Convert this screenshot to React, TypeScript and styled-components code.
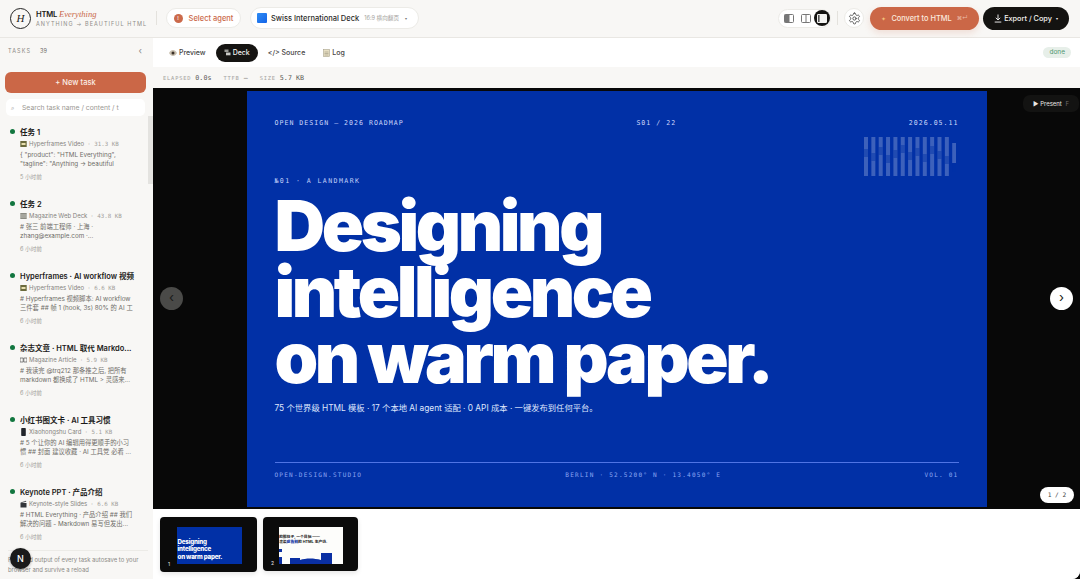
import styled, { createGlobalStyle } from 'styled-components';

const SANS = '"Inter", "Noto Sans CJK SC", sans-serif';
const MONO = '"DejaVu Sans Mono", "Liberation Mono", "Noto Sans CJK SC", monospace';

const tasks = [
	{ title: '任务 1', icon: 'film', type: 'Hyperframes Video', size: '31.3 KB', lines: ['{ "product": "HTML Everything",', '"tagline": "Anything → beautiful'], time: '5 小时前' },
	{ title: '任务 2', icon: 'grid', type: 'Magazine Web Deck', size: '43.8 KB', lines: ['# 张三 前端工程师 · 上海 ·', 'zhang@example.com ·...'], time: '6 小时前' },
	{ title: 'Hyperframes · AI workflow 视频', icon: 'film', type: 'Hyperframes Video', size: '6.6 KB', lines: ['# Hyperframes 视频脚本: AI workflow', '三件套 ## 帧 1 (hook, 3s) 80% 的 AI 工'], time: '6 小时前' },
	{ title: '杂志文章 · HTML 取代 Markdo...', icon: 'book', type: 'Magazine Article', size: '5.9 KB', lines: ['# 我读完 @trq212 那条推之后, 把所有', 'markdown 都换成了 HTML > 灵感来...'], time: '6 小时前' },
	{ title: '小红书图文卡 · AI 工具习惯', icon: 'phone', type: 'Xiaohongshu Card', size: '5.1 KB', lines: ['# 5 个让你的 AI 编辑用得更顺手的小习', '惯 ## 封面 建议收藏 · AI 工具党 必看 ...'], time: '6 小时前' },
	{ title: 'Keynote PPT · 产品介绍', icon: 'clapper', type: 'Keynote-style Slides', size: '6.6 KB', lines: ['# HTML Everything · 产品介绍 ## 我们', '解决的问题 - Markdown 易写但发出...'], time: '6 小时前' },
];

// 슬라이드 우측 상단 바코드 장식: [y, height, 어두운 구간 시작]
const barcode = [
	[0, 39, 12], [0, 39, 20], [0, 39, 8], [0, 39, 24], [0, 39, 14], [0, 39, 4], [0, 39, 18],
	[0, 39, 10], [0, 39, 22], [0, 39, 6], [0, 39, 16], [0, 39, 26], [6, 20, 30],
];

function TaskIcon({ kind }: { kind: string }) {
	if (kind === 'phone') {
		return (
			<svg width="7" height="8" viewBox="0 0 7 8">
				<rect x="1.2" y="0" width="4.6" height="8" rx="0.8" fill="#22252a" />
			</svg>
		);
	}
	if (kind === 'book') {
		return (
			<svg width="7" height="8" viewBox="0 0 7 8">
				<path d="M0 2h3.2v4H0zM3.8 2H7v4H3.8z" fill="none" stroke="#666" strokeWidth="0.8" />
			</svg>
		);
	}
	if (kind === 'clapper') {
		return (
			<svg width="7" height="8" viewBox="0 0 7 8">
				<rect x="0.5" y="3" width="6" height="4.5" fill="#33363a" />
				<path d="M0.5 2.4 6 .8l.3 1L1 3.3z" fill="#55585c" />
			</svg>
		);
	}
	if (kind === 'grid') {
		return (
			<svg width="7" height="8" viewBox="0 0 7 8">
				<rect x="0.3" y="1" width="6.4" height="6" fill="#8b8b82" />
				<path d="M0.3 3h6.4M0.3 5h6.4" stroke="#e5e5dd" strokeWidth="0.6" />
			</svg>
		);
	}
	return (
		<svg width="7" height="8" viewBox="0 0 7 8">
			<rect x="0.3" y="1" width="6.4" height="6" fill="#6b6a3c" />
			<rect x="1.5" y="3" width="4" height="2" fill="#e8dfae" />
		</svg>
	);
}

function PanelIcon({ variant }: { variant: 'left' | 'split' | 'active' }) {
	if (variant === 'active') {
		return (
			<svg width="10" height="9" viewBox="0 0 10 9">
				<rect x="0" y="0" width="10" height="9" rx="1.2" fill="#f4f4f2" />
				<rect x="1" y="1" width="1.6" height="7" fill="#555" />
			</svg>
		);
	}
	return (
		<svg width="10" height="9" viewBox="0 0 10 9" fill="none">
			<rect x="0.5" y="0.5" width="9" height="8" rx="1" stroke="#777" />
			{variant === 'left' ? <rect x="0.5" y="0.5" width="5" height="8" fill="#777" /> : <path d="M5 0.5v8" stroke="#777" />}
		</svg>
	);
}

export default function App() {
	return (
		<>
			<GlobalStyle />
			<Page>
				<TopBar>
					<Brand>
						<BrandMark>H</BrandMark>
						<BrandText>
							<BrandName>
								HTML <em>Everything</em>
							</BrandName>
							<BrandTag>ANYTHING → BEAUTIFUL HTML</BrandTag>
						</BrandText>
					</Brand>
					<TopDivider />
					<AgentPill>
						<AgentDot>!</AgentDot>
						Select agent
					</AgentPill>
					<DeckPill>
						<DeckSwatch />
						<DeckName>Swiss International Deck</DeckName>
						<DeckMeta>16:9 横向翻页</DeckMeta>
						<Caret>▾</Caret>
					</DeckPill>
					<TopRight>
						<LayoutGroup>
							<LayoutButton>
								<PanelIcon variant="left" />
							</LayoutButton>
							<LayoutButton>
								<PanelIcon variant="split" />
							</LayoutButton>
							<LayoutButton $active>
								<PanelIcon variant="active" />
							</LayoutButton>
						</LayoutGroup>
						<TopDivider />
						<GearButton>
							<svg width="13" height="13" viewBox="0 0 24 24" fill="none" stroke="#555" strokeWidth="1.8" strokeLinecap="round" strokeLinejoin="round">
								<path d="M12.22 2h-.44a2 2 0 0 0-2 2v.18a2 2 0 0 1-1 1.73l-.43.25a2 2 0 0 1-2 0l-.15-.08a2 2 0 0 0-2.73.73l-.22.38a2 2 0 0 0 .73 2.73l.15.1a2 2 0 0 1 1 1.72v.51a2 2 0 0 1-1 1.74l-.15.09a2 2 0 0 0-.73 2.73l.22.38a2 2 0 0 0 2.73.73l.15-.08a2 2 0 0 1 2 0l.43.25a2 2 0 0 1 1 1.73V20a2 2 0 0 0 2 2h.44a2 2 0 0 0 2-2v-.18a2 2 0 0 1 1-1.73l.43-.25a2 2 0 0 1 2 0l.15.08a2 2 0 0 0 2.73-.73l.22-.39a2 2 0 0 0-.73-2.73l-.15-.08a2 2 0 0 1-1-1.74v-.5a2 2 0 0 1 1-1.74l.15-.09a2 2 0 0 0 .73-2.73l-.22-.38a2 2 0 0 0-2.73-.73l-.15.08a2 2 0 0 1-2 0l-.43-.25a2 2 0 0 1-1-1.73V4a2 2 0 0 0-2-2z" />
								<circle cx="12" cy="12" r="3" />
							</svg>
						</GearButton>
						<ConvertButton>
							<Spark>✦</Spark> Convert to HTML <Shortcut>⌘↵</Shortcut>
						</ConvertButton>
						<ExportButton>
							<svg width="8" height="9" viewBox="0 0 9 10" fill="none" stroke="#fff" strokeWidth="1">
								<path d="M4.5 0.5v6M2 4.2l2.5 2.5L7 4.2M0.8 9h7.4" />
							</svg>
							Export / Copy <SmallCaret>▾</SmallCaret>
						</ExportButton>
					</TopRight>
				</TopBar>
				<Body>
					<Sidebar>
						<SideHeader>
							<SideLabel>TASKS</SideLabel>
							<SideCount>39</SideCount>
							<Collapse>‹</Collapse>
						</SideHeader>
						<NewTask>+ New task</NewTask>
						<SearchBox>
							<SearchGlyph>⌕</SearchGlyph>
							<SearchText>Search task name / content / t</SearchText>
						</SearchBox>
						<TaskList>
							<ScrollThumb />
							{tasks.map((task) => (
								<TaskItem key={task.title}>
									<TaskDot />
									<TaskBody>
										<TaskTitle>{task.title}</TaskTitle>
										<TaskType>
											<TaskIcon kind={task.icon} />
											<span>{task.type}</span>
											<TaskSize>· {task.size}</TaskSize>
										</TaskType>
										<TaskPreview>
											{task.lines.map((line) => (
												<div key={line}>{line}</div>
											))}
										</TaskPreview>
										<TaskTime>{task.time}</TaskTime>
									</TaskBody>
								</TaskItem>
							))}
						</TaskList>
						<SideFooter>Files and output of every task autosave to your browser and survive a reload</SideFooter>
						<NextBadge>N</NextBadge>
					</Sidebar>
					<Main>
						<TabRow>
							<Tab>
								<svg width="8" height="6" viewBox="0 0 8 6">
									<path d="M0 3c2-4 6-4 8 0-2 4-6 4-8 0z" fill="#c9bfae" />
									<circle cx="4" cy="3" r="1.5" fill="#3a3028" />
								</svg>
								Preview
							</Tab>
							<Tab $active>
								<svg width="7" height="7" viewBox="0 0 7 7">
									<rect x="0.5" y="0.5" width="4" height="2.5" fill="#9a9a96" />
									<rect x="2" y="3.5" width="4.5" height="2.8" fill="#c9c9c5" />
								</svg>
								Deck
							</Tab>
							<Tab>&lt;/&gt; Source</Tab>
							<Tab>
								<svg width="7" height="8" viewBox="0 0 7 8">
									<rect x="0.5" y="0.5" width="6" height="7" fill="#e8e0c4" stroke="#aaa38c" strokeWidth="0.6" />
									<path d="M1.5 3h4M1.5 4.5h4M1.5 6h4" stroke="#8d8672" strokeWidth="0.5" />
								</svg>
								Log
							</Tab>
							<DoneBadge>done</DoneBadge>
						</TabRow>
						<StatsRow>
							<StatLabel>ELAPSED</StatLabel>
							<StatValue>0.0s</StatValue>
							<StatLabel>TTFB</StatLabel>
							<StatValue>—</StatValue>
							<StatLabel>SIZE</StatLabel>
							<StatValue>5.7 KB</StatValue>
						</StatsRow>
						<Stage>
							<Slide>
								<SlideMeta>
									<span>OPEN DESIGN — 2026 ROADMAP</span>
									<span>S01 / 22</span>
									<span>2026.05.11</span>
								</SlideMeta>
								<Barcode>
									<svg width="92" height="40" viewBox="0 0 92 40">
										{barcode.map(([y, h, gap], i) => (
											<g key={i}>
												<rect x={i * 7.35} y={y} width="4" height={h} fill="#fff" opacity={0.24} />
												<rect x={i * 7.35} y={y + gap / 2 + 6} width="4" height="8" fill="#0130a6" opacity={0.45} />
											</g>
										))}
									</svg>
								</Barcode>
								<Kicker>№01 · A LANDMARK</Kicker>
								<Headline>
									Designing
									<br />
									intelligence
									<br />
									on warm paper.
								</Headline>
								<Subline>75 个世界级 HTML 模板 · 17 个本地 AI agent 适配 · 0 API 成本 · 一键发布到任何平台。</Subline>
								<SlideFoot>
									<span>OPEN-DESIGN.STUDIO</span>
									<span>BERLIN · 52.5200° N · 13.4050° E</span>
									<span>VOL. 01</span>
								</SlideFoot>
							</Slide>
							<PresentButton>
								▶ Present <PresentKey>F</PresentKey>
							</PresentButton>
							<NavButton $side="left">‹</NavButton>
							<NavButton $side="right">›</NavButton>
							<PageCount>1 / 2</PageCount>
						</Stage>
						<FilmStrip>
							<Thumb>
								<ThumbSlideBlue>
									<div>Designing</div>
									<div>intelligence</div>
									<div>on warm paper.</div>
								</ThumbSlideBlue>
								<ThumbNumber>1</ThumbNumber>
							</Thumb>
							<Thumb>
								<ThumbSlideLight>
									<ThumbHeading>
										<div>的那柱子, 一个目标 ——</div>
										<div>
											渲染<b>成告别</b>的 HTML 生产线.
										</div>
									</ThumbHeading>
									<ThumbBars>
										<svg width="65" height="37" viewBox="0 0 65 37">
											<path d="M0 22h3v3H0zM0 30h3v7H0zM11 31h10v6H11zM21 33c6-2 14-2 21 0v4H21zM42 26h11v11H42z" fill="#0a2fa3" />
										</svg>
									</ThumbBars>
								</ThumbSlideLight>
								<ThumbNumber>2</ThumbNumber>
							</Thumb>
						</FilmStrip>
					</Main>
				</Body>
			</Page>
		</>
	);
}

const GlobalStyle = createGlobalStyle`
	html, body {
		margin: 0;
		padding: 0;
		background: #0b0b0b;
	}
	* {
		box-sizing: border-box;
	}
`;

const Page = styled.div`
	width: 1080px;
	height: 579px;
	overflow: hidden;
	display: flex;
	flex-direction: column;
	background: #ffffff;
	border-bottom-right-radius: 8px;
	font-family: ${SANS};
	color: #1b1a18;
`;

const TopBar = styled.header`
	height: 38px;
	flex: none;
	display: flex;
	align-items: center;
	padding: 0 11px 1px 10px;
	background: #f8f7f5;
	border-bottom: 1px solid #e9e7e3;
`;

const Brand = styled.div`
	width: 146px;
	display: flex;
	align-items: center;
	gap: 5px;
`;

const BrandMark = styled.div`
	width: 21px;
	height: 21px;
	border-radius: 50%;
	border: 1px solid #222;
	display: flex;
	align-items: center;
	justify-content: center;
	font-family: 'Liberation Serif', serif;
	font-style: italic;
	font-size: 11px;
`;

const BrandText = styled.div`
	display: flex;
	flex-direction: column;
	gap: 1px;
`;

const BrandName = styled.div`
	font-size: 7.6px;
	line-height: 10px;
	font-weight: 600;
	letter-spacing: -0.2px;

	em {
		font-family: 'Liberation Serif', serif;
		font-size: 8.6px;
		font-weight: 400;
		color: #c9684a;
		letter-spacing: 0;
	}
`;

const BrandTag = styled.div`
	font-size: 5.5px;
	line-height: 7px;
	letter-spacing: 1.05px;
	color: #8f8d88;
	white-space: nowrap;
`;

const TopDivider = styled.div`
	width: 1px;
	height: 14px;
	background: #e4e2dd;
	flex: none;
`;

const AgentPill = styled.div`
	margin-left: 9px;
	height: 20px;
	width: 75px;
	border-radius: 10px;
	background: #fff;
	border: 1px solid #ecebe7;
	display: flex;
	align-items: center;
	justify-content: center;
	gap: 6px;
	font-size: 7.5px;
	font-weight: 500;
	color: #cb6a4b;
`;

const AgentDot = styled.span`
	width: 9px;
	height: 9px;
	border-radius: 50%;
	background: #cb6a4b;
	color: #fff;
	font-size: 5px;
	line-height: 9px;
	text-align: center;
`;

const DeckPill = styled.div`
	margin-left: 9px;
	height: 22px;
	width: 169px;
	border-radius: 11px;
	background: #fff;
	border: 1px solid #ecebe7;
	display: flex;
	align-items: center;
	padding-left: 6px;
`;

const DeckSwatch = styled.span`
	width: 10px;
	height: 10px;
	border-radius: 1px;
	background: linear-gradient(135deg, #2f8cf3, #1464e8);
`;

const DeckName = styled.span`
	margin-left: 4px;
	font-size: 7.5px;
	font-weight: 500;
	color: #2b2a28;
	white-space: nowrap;
`;

const DeckMeta = styled.span`
	margin-left: 5px;
	font-size: 5.6px;
	color: #a6a4a0;
	white-space: nowrap;
`;

const Caret = styled.span`
	margin-left: 6px;
	font-size: 4px;
	color: #777;
`;

const TopRight = styled.div`
	margin-left: auto;
	display: flex;
	align-items: center;
	gap: 6px;
`;

const LayoutGroup = styled.div`
	width: 53px;
	height: 19px;
	border-radius: 10px;
	background: #fff;
	border: 1px solid #ecebe7;
	display: flex;
	align-items: center;
	justify-content: space-between;
	padding: 0 0 0 2px;
`;

const LayoutButton = styled.span<{ $active?: boolean }>`
	width: 16px;
	height: 16px;
	border-radius: 50%;
	background: ${({ $active }) => ($active ? '#141311' : 'transparent')};
	display: flex;
	align-items: center;
	justify-content: center;
`;

const GearButton = styled.span`
	width: 20px;
	height: 20px;
	border-radius: 50%;
	background: #fff;
	border: 1px solid #ecebe7;
	display: flex;
	align-items: center;
	justify-content: center;
`;

const ConvertButton = styled.div`
	width: 109px;
	height: 23px;
	border-radius: 12px;
	background: #cb6747;
	box-shadow: 0 3px 7px rgba(203, 103, 71, 0.18);
	color: #fbeadf;
	display: flex;
	align-items: center;
	justify-content: center;
	gap: 3px;
	font-size: 7.4px;
	font-weight: 500;
	white-space: pre;
`;

const Spark = styled.span`
	color: #f3c27a;
	font-size: 6px;
`;

const Shortcut = styled.span`
	font-size: 5.5px;
	color: #eab9a3;
`;

const ExportButton = styled.div`
	margin-left: -2px;
	width: 86px;
	height: 23px;
	border-radius: 12px;
	background: #141311;
	color: #f2f1ee;
	display: flex;
	align-items: center;
	justify-content: center;
	gap: 2px;
	font-size: 7.3px;
	font-weight: 500;
`;

const SmallCaret = styled.span`
	font-size: 4px;
	margin-left: 2px;
`;

const Body = styled.div`
	flex: 1;
	min-height: 0;
	display: flex;
`;

const Sidebar = styled.aside`
	position: relative;
	width: 153px;
	flex: none;
	display: flex;
	flex-direction: column;
	background: #f8f7f5;
`;

const SideHeader = styled.div`
	height: 27px;
	display: flex;
	align-items: center;
	padding: 0 11px 2px 8px;
	flex: none;
`;

const SideLabel = styled.span`
	font-size: 5.5px;
	letter-spacing: 1.1px;
	color: #8a8884;
`;

const SideCount = styled.span`
	margin-left: 9px;
	font-size: 5.5px;
	color: #6d6b67;
`;

const Collapse = styled.span`
	margin-left: auto;
	font-size: 9px;
	color: #888;
`;

const NewTask = styled.div`
	margin: 7px 7px 0 5px;
	height: 21px;
	flex: none;
	border-radius: 6px;
	background: #cb6747;
	color: #fbeee6;
	display: flex;
	align-items: center;
	justify-content: center;
	font-size: 7.5px;
	font-weight: 500;
`;

const SearchBox = styled.div`
	margin: 6px 8px 0 6px;
	height: 17px;
	flex: none;
	border-radius: 5px;
	background: #fff;
	display: flex;
	align-items: center;
	padding-left: 5px;
	gap: 8px;
	overflow: hidden;
`;

const SearchGlyph = styled.span`
	font-size: 6px;
	color: #888;
`;

const SearchText = styled.span`
	font-size: 6.8px;
	color: #9b9994;
	white-space: nowrap;
	overflow: hidden;
`;

const TaskList = styled.div`
	position: relative;
	flex: 1;
	min-height: 0;
	padding-top: 11px;
	overflow: hidden;
`;

const ScrollThumb = styled.div`
	position: absolute;
	right: 0;
	top: 0;
	width: 5px;
	height: 68px;
	background: #e4e3e0;
`;

const TaskItem = styled.div`
	height: 72px;
	display: flex;
	padding-left: 10px;
	gap: 5px;
`;

const TaskDot = styled.span`
	width: 5px;
	height: 5px;
	margin-top: 2px;
	border-radius: 50%;
	background: #12763f;
	flex: none;
`;

const TaskBody = styled.div`
	min-width: 0;
`;

const TaskTitle = styled.div`
	font-size: 7.5px;
	line-height: 11px;
	font-weight: 600;
	color: #1c1b19;
	white-space: nowrap;
`;

const TaskType = styled.div`
	display: flex;
	align-items: center;
	gap: 2px;
	margin-top: 1px;
	font-size: 6px;
	line-height: 10px;
	color: #85837e;
	white-space: nowrap;
`;

const TaskSize = styled.span`
	margin-left: 1px;
	font-family: ${MONO};
	font-size: 5.8px;
	color: #a3a19c;
`;

const TaskPreview = styled.div`
	margin-top: 2px;
	font-size: 6.3px;
	line-height: 9px;
	color: #6f6d68;
	white-space: nowrap;
`;

const TaskTime = styled.div`
	margin-top: 4px;
	font-size: 5.6px;
	line-height: 8px;
	color: #a09e99;
`;

const SideFooter = styled.div`
	flex: none;
	height: 29px;
	margin: 0 5px 0 8px;
	padding-top: 4px;
	border-top: 1px solid #ecebe7;
	font-size: 5.9px;
	line-height: 9.5px;
	color: #8b8985;
`;

const NextBadge = styled.div`
	position: absolute;
	left: 10px;
	bottom: 10px;
	width: 21px;
	height: 21px;
	border-radius: 50%;
	background: #1a1a1a;
	color: #fff;
	display: flex;
	align-items: center;
	justify-content: center;
	font-size: 9px;
	font-weight: 500;
	box-shadow: 0 1px 3px rgba(0, 0, 0, 0.3);
`;

const Main = styled.main`
	flex: 1;
	min-width: 0;
	display: flex;
	flex-direction: column;
`;

const TabRow = styled.div`
	height: 29px;
	flex: none;
	background: #fff;
	display: flex;
	align-items: center;
	gap: 2px;
	padding: 0 9px 0 8px;
`;

const Tab = styled.div<{ $active?: boolean }>`
	height: 18px;
	padding: 0 8px;
	display: flex;
	align-items: center;
	gap: 2px;
	border-radius: 9px;
	background: ${({ $active }) => ($active ? '#151412' : 'transparent')};
	color: ${({ $active }) => ($active ? '#f4f3f0' : '#45433f')};
	font-size: 7px;
	font-weight: 500;
`;

const DoneBadge = styled.span`
	margin-left: auto;
	padding: 0 6px;
	height: 11px;
	line-height: 11px;
	border-radius: 6px;
	background: #e7efe9;
	color: #4f9570;
	font-size: 6.5px;
`;

const StatsRow = styled.div`
	height: 21px;
	flex: none;
	background: #f8f7f5;
	display: flex;
	align-items: center;
	padding-left: 10px;
`;

const StatLabel = styled.span`
	font-family: ${MONO};
	font-size: 5.4px;
	letter-spacing: 0.8px;
	color: #a5a39f;
	margin-right: 4px;

	&:not(:first-child) {
		margin-left: 12px;
	}
`;

const StatValue = styled.span`
	font-family: ${MONO};
	font-size: 6.7px;
	color: #5a5854;
`;

const Stage = styled.div`
	position: relative;
	height: 421px;
	flex: none;
	background: #080808;
	display: flex;
	justify-content: center;
	padding: 3px 0 2px 0;
`;

const Slide = styled.div`
	position: relative;
	width: 740px;
	height: 416px;
	background: #0130a6;
	color: #fff;
	padding: 28px 28px 0 28px;
	display: flex;
	flex-direction: column;
`;

const SlideMeta = styled.div`
	display: flex;
	justify-content: space-between;
	font-family: ${MONO};
	font-size: 6.6px;
	line-height: 9px;
	letter-spacing: 1px;
	color: #cdd8fb;
`;

const Barcode = styled.div`
	position: absolute;
	left: 617px;
	top: 46px;
	line-height: 0;
`;

const Kicker = styled.div`
	margin-top: 49px;
	font-family: ${MONO};
	font-size: 6.6px;
	line-height: 9px;
	letter-spacing: 1.4px;
	color: #c3d0fa;
`;

const Headline = styled.h1`
	margin: 7px 0 0 0;
	font-family: 'Inter', sans-serif;
	font-weight: 900;
	font-size: 70px;
	line-height: 66px;
	letter-spacing: -3.4px;
	color: #ffffff;
	white-space: nowrap;
`;

const Subline = styled.div`
	margin-top: 11px;
	font-size: 8.3px;
	line-height: 12px;
	color: #dfe6fd;
	white-space: nowrap;
`;

const SlideFoot = styled.div`
	margin-top: 48px;
	padding-top: 8px;
	border-top: 1px solid #4f74e4;
	display: flex;
	justify-content: space-between;
	font-family: ${MONO};
	font-size: 6.1px;
	line-height: 8px;
	letter-spacing: 1.2px;
	color: #8ba6f2;
`;

const PresentButton = styled.div`
	position: absolute;
	top: 7px;
	right: 1px;
	width: 56px;
	height: 17px;
	border-radius: 7px;
	background: #131312;
	color: #e9e8e5;
	display: flex;
	align-items: center;
	justify-content: center;
	gap: 2px;
	font-size: 6px;
	white-space: pre;
`;

const PresentKey = styled.span`
	color: #6d6c69;
`;

const NavButton = styled.div<{ $side: 'left' | 'right' }>`
	position: absolute;
	top: 199px;
	${({ $side }) => ($side === 'left' ? 'left: 7px;' : 'right: 7px;')}
	width: 23px;
	height: 23px;
	border-radius: 50%;
	background: ${({ $side }) => ($side === 'left' ? '#4a4a48' : '#ffffff')};
	color: #1a1a1a;
	display: flex;
	align-items: center;
	justify-content: center;
	font-size: 13px;
	line-height: 1;
	padding-bottom: 2px;
`;

const PageCount = styled.div`
	position: absolute;
	right: 6px;
	bottom: 6px;
	width: 34px;
	height: 16px;
	border-radius: 8px;
	background: #fff;
	color: #444;
	font-family: ${MONO};
	font-size: 6.2px;
	line-height: 16px;
	text-align: center;
`;

const FilmStrip = styled.div`
	flex: 1;
	background: #fff;
	display: flex;
	align-items: flex-start;
	gap: 6px;
	padding: 8px 0 0 7px;
`;

const Thumb = styled.div`
	position: relative;
	width: 97px;
	height: 55px;
	border-radius: 4px;
	background: #0b0b0b;
	display: flex;
	justify-content: center;
	align-items: flex-start;
	padding-top: 10px;
	box-shadow: 0 2px 5px rgba(0, 0, 0, 0.1);
	overflow: hidden;

	& + & {
		width: 95px;
		height: 54px;
	}
`;

const ThumbSlideBlue = styled.div`
	width: 65px;
	height: 37px;
	margin-left: 1px;
	background: #0130a6;
	color: #fff;
	padding: 11px 0 0 1px;
	font-size: 6.2px;
	line-height: 7.4px;
	font-weight: 800;
	letter-spacing: -0.2px;
	white-space: nowrap;
`;

const ThumbSlideLight = styled.div`
	position: relative;
	width: 64px;
	height: 37px;
	margin-left: 1px;
	background: #fdfdfb;
	overflow: hidden;
`;

const ThumbHeading = styled.div`
	padding-top: 7px;
	font-size: 3.8px;
	line-height: 5px;
	font-weight: 700;
	color: #1a1a1a;
	white-space: nowrap;

	b {
		color: #0a2fa3;
	}
`;

const ThumbBars = styled.div`
	position: absolute;
	left: 0;
	bottom: 0;
	line-height: 0;
`;

const ThumbNumber = styled.span`
	position: absolute;
	left: 8px;
	bottom: 5px;
	font-size: 5px;
	line-height: 6px;
	color: #e5e5e5;
`;
